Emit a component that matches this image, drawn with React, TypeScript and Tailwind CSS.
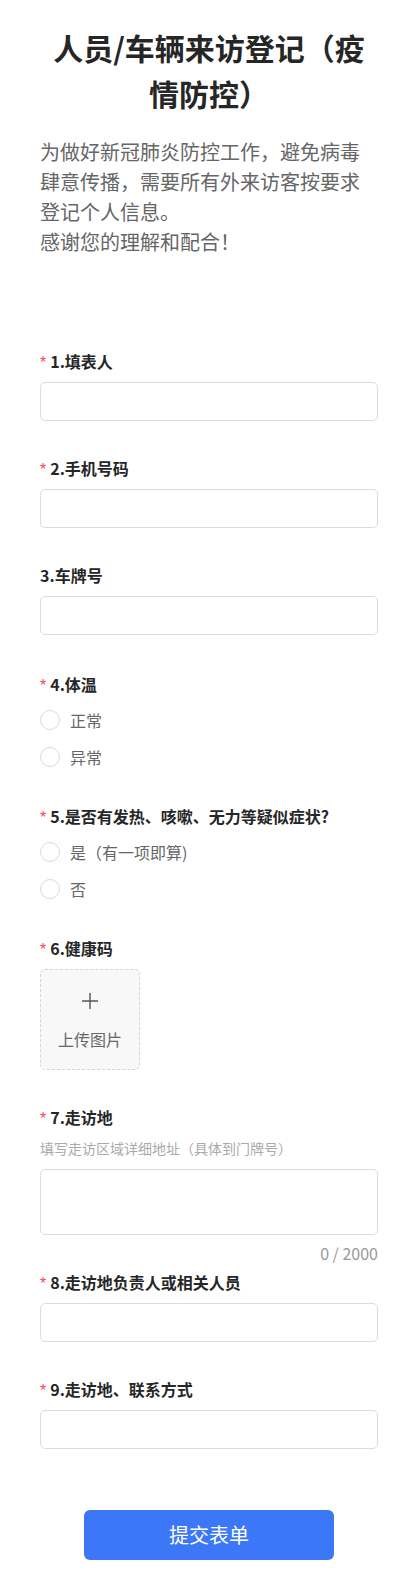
import { useState } from 'react'

type Field =
  | { kind: 'input'; label: string; required?: boolean; gap: string }
  | { kind: 'radio'; label: string; required?: boolean; options: string[] }
  | { kind: 'upload'; label: string; required?: boolean }
  | { kind: 'textarea'; label: string; required?: boolean; hint: string }

const fields: Field[] = [
  { kind: 'input', label: '1.填表人', required: true, gap: 'mb-[35px]' },
  { kind: 'input', label: '2.手机号码', required: true, gap: 'mb-[35px]' },
  { kind: 'input', label: '3.车牌号', gap: 'mb-[37px]' },
  { kind: 'radio', label: '4.体温', required: true, options: ['正常', '异常'] },
  {
    kind: 'radio',
    label: '5.是否有发热、咳嗽、无力等疑似症状?',
    required: true,
    options: ['是（有一项即算)', '否'],
  },
  { kind: 'upload', label: '6.健康码', required: true },
  { kind: 'textarea', label: '7.走访地', required: true, hint: '填写走访区域详细地址（具体到门牌号）' },
  { kind: 'input', label: '8.走访地负责人或相关人员', required: true, gap: 'mb-[35px]' },
  { kind: 'input', label: '9.走访地、联系方式', required: true, gap: 'mb-0' },
]

function Label({ text, required }: { text: string; required?: boolean }) {
  return (
    <div className="h-[24px] text-[16px] font-bold text-[#262626] leading-[24px] whitespace-nowrap">
      {required ? (
        <span className="text-[#f5484a] font-normal mr-[4px] font-['Liberation_Sans',sans-serif]">*</span>
      ) : null}
      {text}
    </div>
  )
}

function Radio({ options }: { options: string[] }) {
  const [val, setVal] = useState<string | null>(null)
  return (
    <div className="mt-[5px]">
      {options.map((o) => (
        <label key={o} className="flex items-center h-[37px] cursor-pointer" onClick={() => setVal(o)}>
          <span
            className={
              val === o
                ? 'w-[20px] h-[20px] rounded-full border-[6px] border-[#3b78f6] bg-white'
                : 'w-[20px] h-[20px] rounded-full border border-[#dadada] bg-white'
            }
          />
          <span className="ml-[10px] text-[16px] text-[#666] leading-[22px]">{o}</span>
        </label>
      ))}
    </div>
  )
}

export default function App() {
  const [addr, setAddr] = useState('')
  return (
    <div className="min-h-[1581px] bg-white px-[40px] pt-[24px] pb-[20px] font-['Noto_Sans_CJK_SC','Noto_Sans',sans-serif]">
      <h1 className="text-center text-[30px] leading-[46px] font-bold text-[#262626]">
        人员/车辆来访登记（疫情防控）
      </h1>
      <p className="mt-[21px] text-[20px] leading-[30px] text-[#666]">
        为做好新冠肺炎防控工作，避免病毒肆意传播，需要所有外来访客按要求登记个人信息。
        <br />
        感谢您的理解和配合！
      </p>

      <div className="pt-[92px] pb-[61px]">
        {fields.map((f) => {
          if (f.kind === 'input') {
            return (
              <div key={f.label} className={f.gap}>
                <Label text={f.label} required={f.required} />
                <input className="mt-[9px] block w-full h-[39px] rounded-[5px] border border-[#dcdcdc] px-[12px] text-[16px] outline-none" />
              </div>
            )
          }
          if (f.kind === 'radio') {
            return (
              <div key={f.label} className="mb-[29px]">
                <Label text={f.label} required={f.required} />
                <Radio options={f.options} />
              </div>
            )
          }
          if (f.kind === 'upload') {
            return (
              <div key={f.label} className="mb-[35px]">
                <Label text={f.label} required={f.required} />
                <div className="mt-[9px] w-[100px] h-[101px] rounded-[5px] border border-dashed border-[#d6d6d6] bg-[#f8f8f8] flex flex-col items-center pt-[22px]">
                  <svg width="18" height="18" viewBox="0 0 18 18" fill="none">
                    <path d="M9 1v16M1 9h16" stroke="#555" strokeWidth="1.4" />
                  </svg>
                  <span className="mt-[18px] text-[16px] leading-[22px] text-[#666]">上传图片</span>
                </div>
              </div>
            )
          }
          return (
            <div key={f.label} className="mb-[6px]">
              <Label text={f.label} required={f.required} />
              <div className="mt-[9px] text-[14px] leading-[20px] text-[#aaa]">{f.hint}</div>
              <textarea
                value={addr}
                onChange={(e) => setAddr(e.target.value)}
                className="mt-[11px] block w-full h-[66px] rounded-[5px] border border-[#dcdcdc] px-[12px] py-[8px] text-[16px] outline-none resize-none"
              />
              <div className="mt-[7px] text-right text-[16px] leading-[22px] text-[#999]">
                {addr.length} / 2000
              </div>
            </div>
          )
        })}
      </div>

      <div className="flex justify-center">
        <button className="w-[250px] h-[50px] rounded-[6px] bg-[#3b77f6] text-white text-[20px]">
          提交表单
        </button>
      </div>
    </div>
  )
}
